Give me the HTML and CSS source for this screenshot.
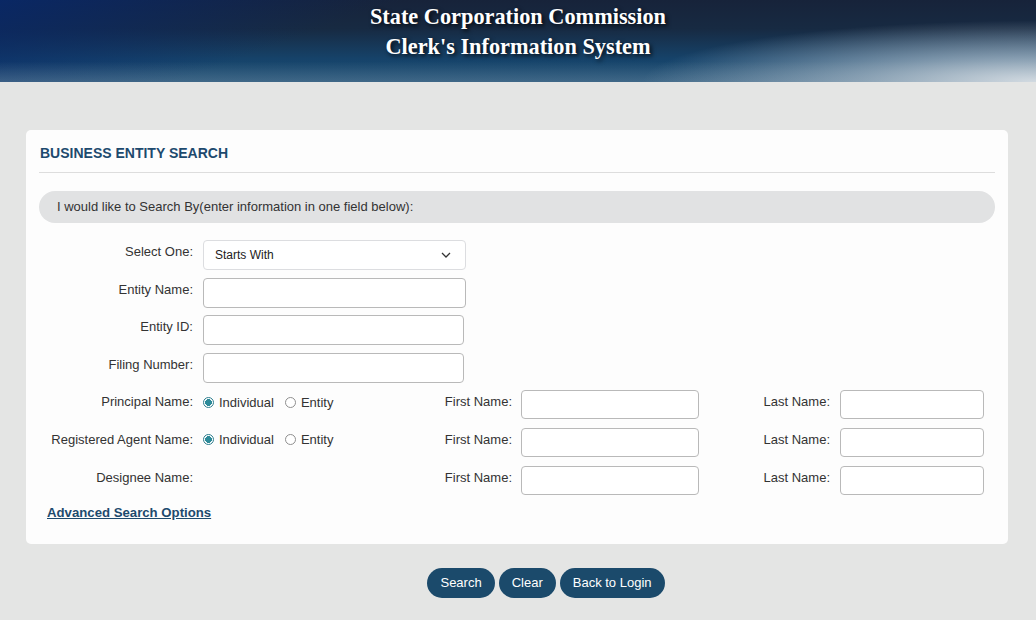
FILE: index.html
```html
<!DOCTYPE html>
<html lang="en">
<head>
<meta charset="utf-8">
<title>Business Entity Search</title>
<link rel="stylesheet" href="styles.css">
</head>
<body>
<header class="banner">
  <div class="banner-title">State Corporation Commission</div>
  <div class="banner-title">Clerk's Information System</div>
</header>
<main class="page">
  <section class="card">
    <h1 class="card-title">BUSINESS ENTITY SEARCH</h1>
    <div class="divider"></div>
    <div class="pill">I would like to Search By(enter information in one field below):</div>
    <div class="form">
      <div class="row">
        <label class="lbl">Select One:</label>
        <div class="select">
          <span>Starts With</span>
          <svg class="chev" width="10" height="6" viewBox="0 0 10 6"><path d="M1 1l4 4 4-4" fill="none" stroke="#333" stroke-width="1.3"/></svg>
        </div>
      </div>
      <div class="row">
        <label class="lbl">Entity Name:</label>
        <input class="field w-wide" type="text">
      </div>
      <div class="row">
        <label class="lbl">Entity ID:</label>
        <input class="field w-mid" type="text">
      </div>
      <div class="row">
        <label class="lbl">Filing Number:</label>
        <input class="field w-mid" type="text">
      </div>
      <div class="row">
        <label class="lbl">Principal Name:</label>
        <div class="radios">
          <span class="radio on"></span><span class="rtext">Individual</span>
          <span class="radio"></span><span class="rtext">Entity</span>
        </div>
        <label class="lbl-first">First Name:</label>
        <input class="field w-first" type="text">
        <label class="lbl-last">Last Name:</label>
        <input class="field w-last" type="text">
      </div>
      <div class="row">
        <label class="lbl">Registered Agent Name:</label>
        <div class="radios">
          <span class="radio on"></span><span class="rtext">Individual</span>
          <span class="radio"></span><span class="rtext">Entity</span>
        </div>
        <label class="lbl-first">First Name:</label>
        <input class="field w-first" type="text">
        <label class="lbl-last">Last Name:</label>
        <input class="field w-last" type="text">
      </div>
      <div class="row">
        <label class="lbl">Designee Name:</label>
        <div class="radios"></div>
        <label class="lbl-first">First Name:</label>
        <input class="field w-first" type="text">
        <label class="lbl-last">Last Name:</label>
        <input class="field w-last" type="text">
      </div>
    </div>
    <a class="adv" href="#">Advanced Search Options</a>
  </section>
  <div class="actions">
    <button class="btn">Search</button>
    <button class="btn">Clear</button>
    <button class="btn">Back to Login</button>
  </div>
</main>
</body>
</html>
```
FILE: styles.css
```css
html, body {
  margin: 0;
  padding: 0;
}
body {
  background: #e4e5e4;
  font-family: "Liberation Sans", Arial, sans-serif;
  font-size: 13px;
  color: #333;
}
.banner {
  height: 82px;
  box-sizing: border-box;
  padding-top: 2px;
  text-align: center;
  background:
    radial-gradient(ellipse 38% 75% at 100% 100%, rgba(215,222,228,0.97) 0%, rgba(190,202,212,0.6) 45%, rgba(150,170,190,0) 100%),
    linear-gradient(to bottom, rgba(120,145,170,0) 75%, rgba(120,145,170,0.4) 100%),
    linear-gradient(160deg, rgba(8,40,105,0.9) 0%, rgba(8,40,105,0) 32%),
    linear-gradient(to bottom, #17233a 0%, #172a42 35%, #16436a 72%, #1a4c70 100%);
}
.banner-title {
  font-family: "Liberation Serif", "Times New Roman", serif;
  font-weight: bold;
  font-size: 22.3px;
  line-height: 30px;
  color: #fff;
  text-shadow: 2px 2px 4px rgba(0,0,0,0.8);
}
.page {
  padding: 48px 28px 0 26px;
}
.card {
  background: #fdfdfd;
  border-radius: 5px;
  padding: 14px 13px 22px 13px;
}
.card-title {
  margin: 0 0 0 1px;
  font-size: 14px;
  line-height: 18px;
  font-weight: bold;
  color: #1d4a6e;
}
.divider {
  height: 1px;
  background: #dddddd;
  margin: 10px 0 18px 0;
}
.pill {
  height: 32px;
  line-height: 32px;
  border-radius: 16px;
  background: #e1e2e3;
  padding-left: 18px;
  color: #333;
}
.form {
  display: flex;
  flex-direction: column;
  gap: 7.6px;
  margin-top: 17px;
}
.row {
  display: flex;
  align-items: flex-start;
  height: 30px;
}
.lbl {
  width: 154px;
  margin-right: 10px;
  text-align: right;
  line-height: 16px;
  padding-top: 4px;
  flex: none;
}
.select {
  width: 263px;
  height: 30px;
  box-sizing: border-box;
  border: 1px solid #dcdde0;
  border-radius: 4px;
  background: #fff;
  display: flex;
  align-items: center;
  justify-content: space-between;
  padding: 0 14px 0 11px;
  font-size: 12px;
  color: #222;
}
.chev {
  display: block;
}
.field {
  height: 30px;
  box-sizing: border-box;
  border: 1px solid #b9b9b9;
  border-radius: 4px;
  background: #fff;
  margin: 0;
  padding: 0 6px;
  flex: none;
}
.w-wide { width: 263px; }
.w-mid { width: 261px; }
.w-first { width: 178px; height: 29px; }
.w-last { width: 144px; height: 29px; }
.radios {
  width: 228px;
  flex: none;
  display: flex;
  align-items: center;
  height: 16px;
  padding-top: 4px;
}
.radio {
  width: 9px;
  height: 9px;
  border-radius: 50%;
  border: 1px solid #8f8f8f;
  background: #fff;
  margin-right: 5px;
  flex: none;
  box-sizing: content-box;
}
.radio.on {
  border-color: #2d7d8e;
  background: radial-gradient(circle, #2d8a99 0, #2d8a99 3.2px, #fff 3.6px);
}
.rtext {
  margin-right: 11px;
}
.lbl-first {
  width: 81px;
  text-align: right;
  margin-right: 9px;
  line-height: 16px;
  padding-top: 4px;
  flex: none;
}
.lbl-last {
  width: 131px;
  text-align: right;
  margin-right: 10px;
  line-height: 16px;
  padding-top: 4px;
  flex: none;
}
.adv {
  display: inline-block;
  margin: 8px 0 0 8px;
  line-height: 18px;
  font-weight: bold;
  font-size: 13.2px;
  color: #1d4a6e;
  text-decoration: underline;
}
.actions {
  display: flex;
  justify-content: center;
  gap: 4px;
  margin-top: 24px;
  padding-left: 58px;
}
.btn {
  height: 30px;
  border: none;
  border-radius: 15px;
  background: #1b4a6b;
  color: #fff;
  font-family: "Liberation Sans", Arial, sans-serif;
  font-size: 13px;
  padding: 0 13px;
  cursor: pointer;
}
```
